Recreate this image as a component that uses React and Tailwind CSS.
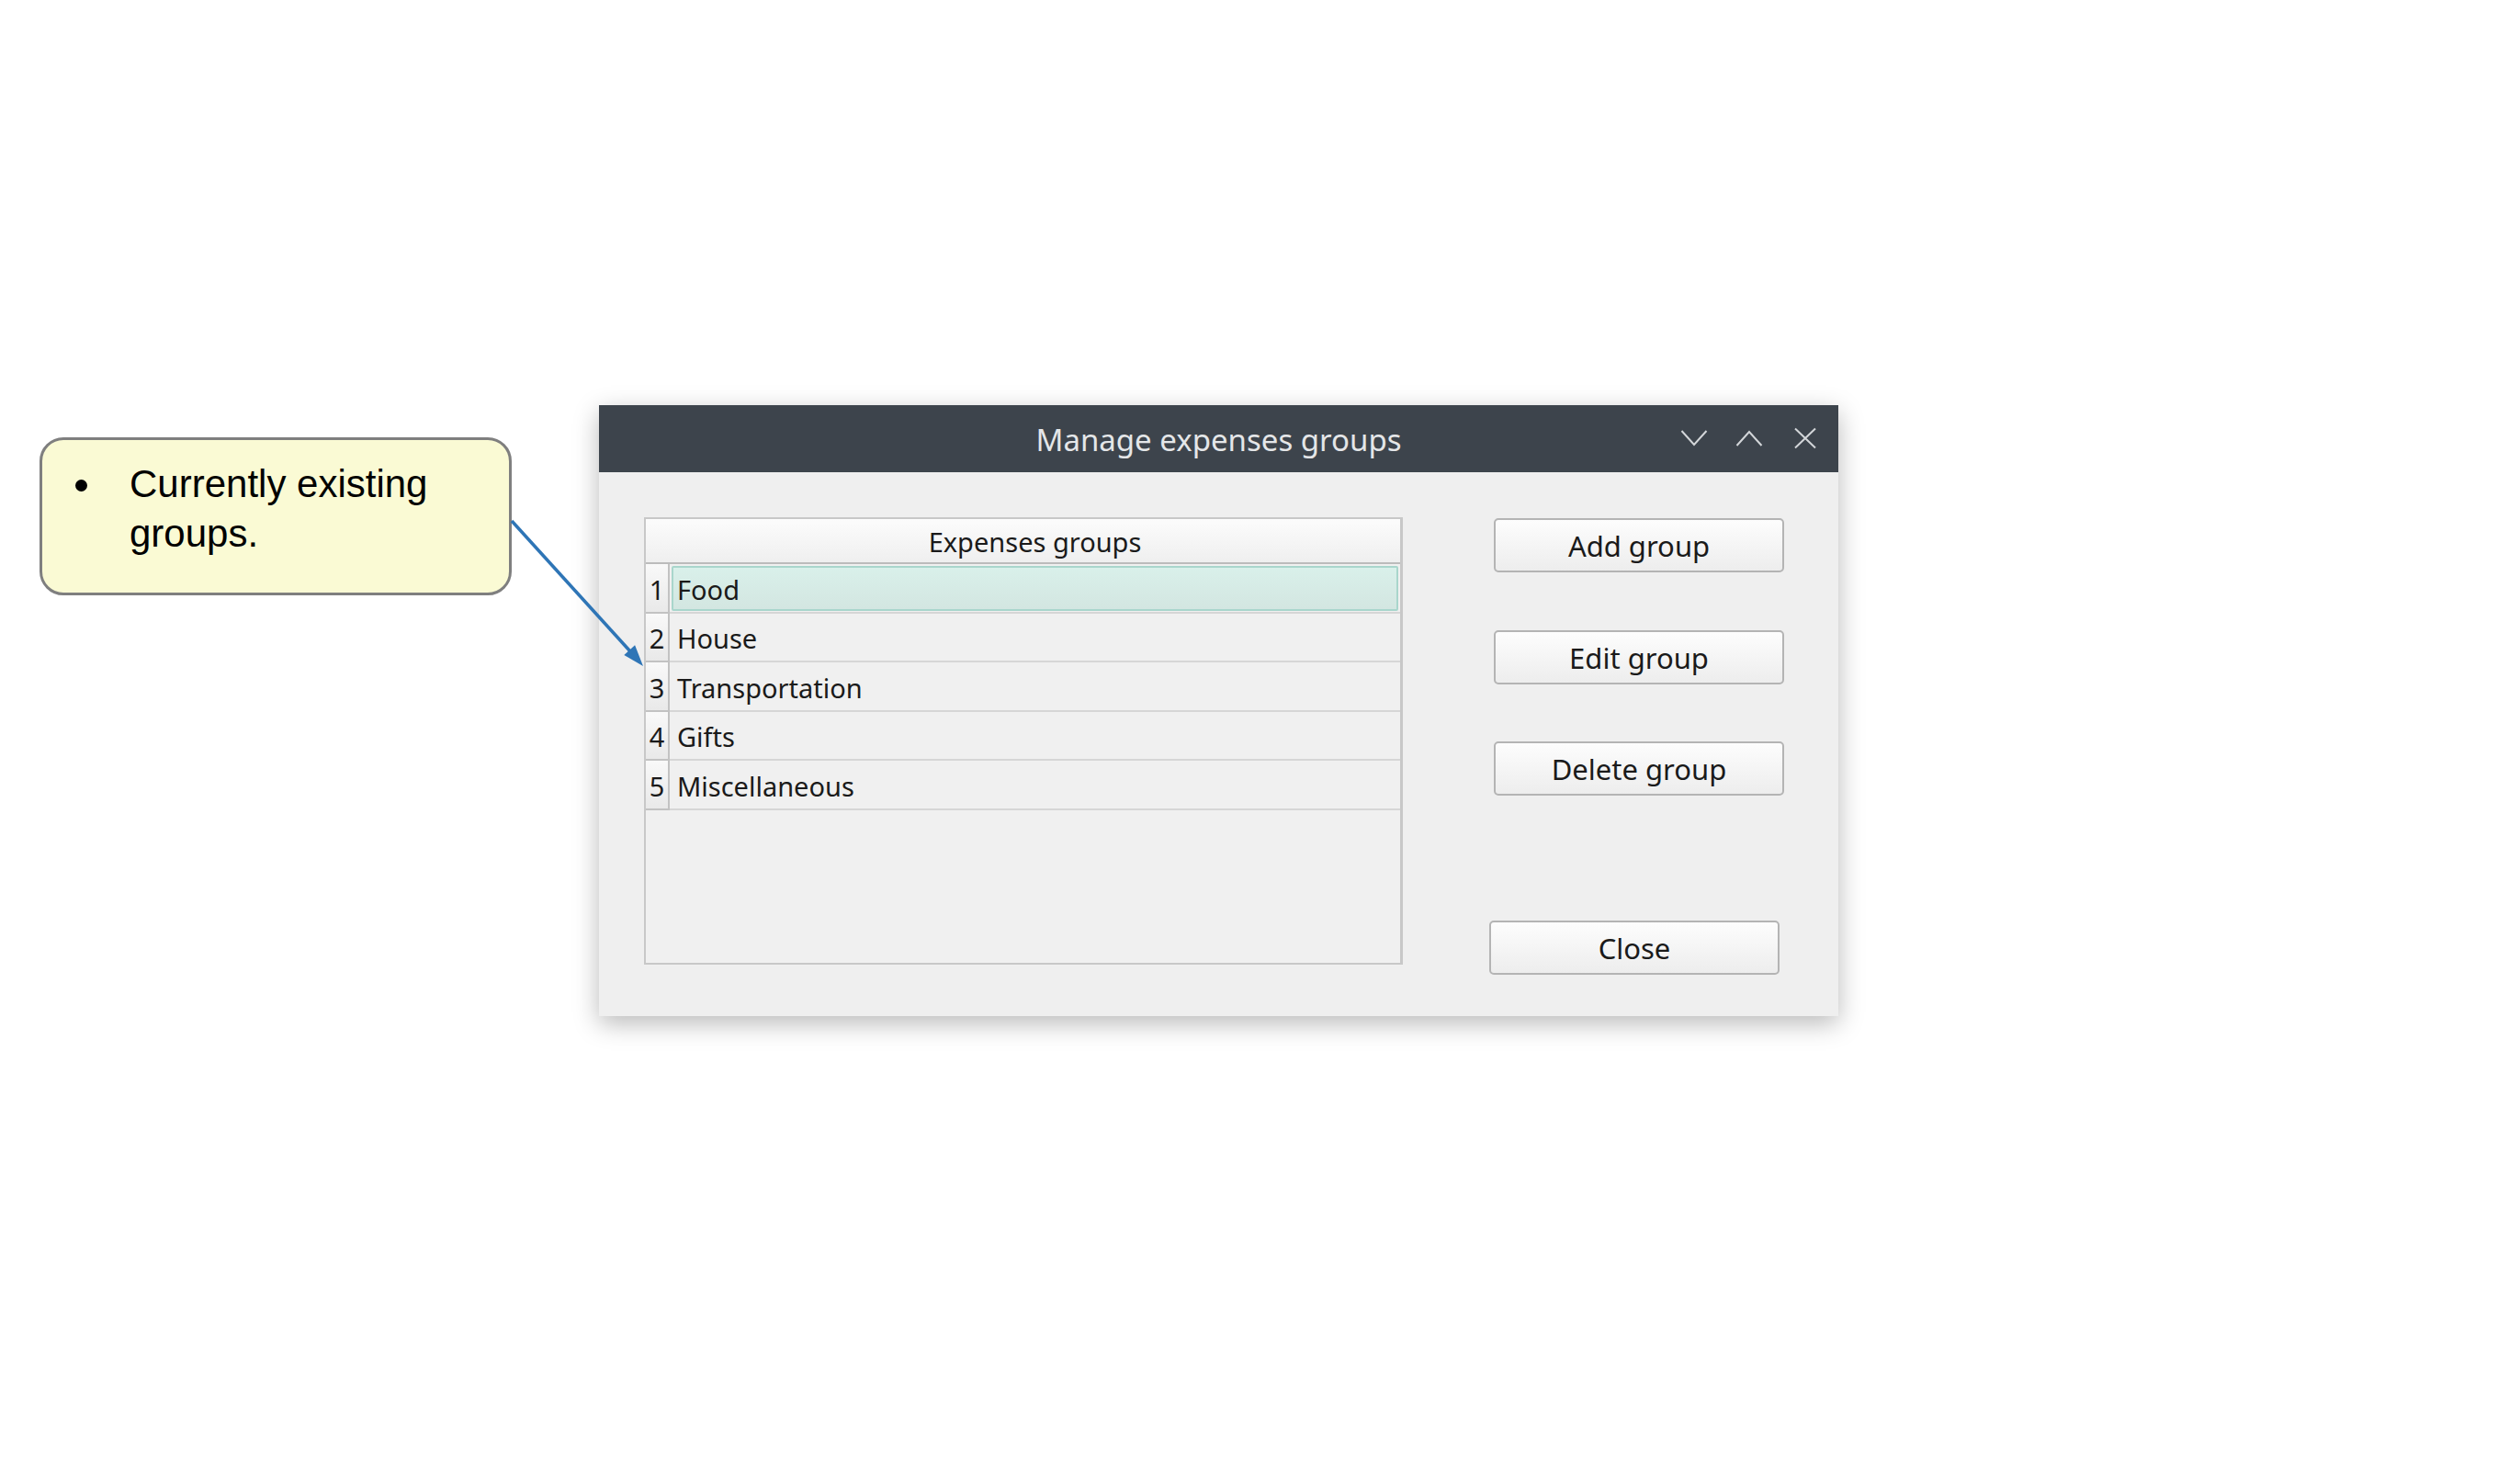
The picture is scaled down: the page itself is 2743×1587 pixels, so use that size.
import React from "react";

const groups = ["Food", "House", "Transportation", "Gifts", "Miscellaneous"];

function ChevronDown() {
    return (
        <svg width="30" height="20" viewBox="0 0 30 20" fill="none">
            <path d="M1.5 2 L15 17 L28.5 2" stroke="#d3d6d9" strokeWidth="2" />
        </svg>
    );
}

function ChevronUp() {
    return (
        <svg width="30" height="20" viewBox="0 0 30 20" fill="none">
            <path d="M1.5 18 L15 3 L28.5 18" stroke="#d3d6d9" strokeWidth="2" />
        </svg>
    );
}

function CloseIcon() {
    return (
        <svg width="26" height="24" viewBox="0 0 26 24" fill="none">
            <path d="M2 1.5 L24 22.5 M24 1.5 L2 22.5" stroke="#d3d6d9" strokeWidth="2" />
        </svg>
    );
}

function Button({ children, className = "" }) {
    return (
        <button
            className={
                "w-[316px] h-[59px] rounded-[5px] border-2 border-[#b4b4b4] bg-gradient-to-b from-[#fdfdfd] to-[#ededed] text-[31px] text-[#1a1a1a] flex items-center justify-center pt-[2px] " +
                className
            }
        >
            {children}
        </button>
    );
}

function GroupsTable() {
    return (
        <div className="w-[826px] h-[487px] flex flex-col border-t-2 border-l-2 border-b-2 border-r-[3px] border-[#c8c8c8] bg-[#f0f0f0]">
            <div className="h-[49px] flex shrink-0 bg-gradient-to-b from-[#fcfcfc] to-[#efefef] border-b-2 border-[#bcbcbc]">
                <div className="w-[26px]" />
                <div className="flex-1 flex items-center justify-center pt-[3px] text-[29px] text-[#1a1a1a]">
                    Expenses groups
                </div>
            </div>
            {groups.map((g, i) => (
                <div key={g} className="h-[53.6px] flex shrink-0">
                    <div className="w-[26px] flex items-center justify-center pt-[3px] text-[29px] text-[#1a1a1a] bg-gradient-to-b from-[#f9f9f9] to-[#e9e9e9] border-r-2 border-b-2 border-[#c2c2c2]">
                        {i + 1}
                    </div>
                    <div className="flex-1 border-b-2 border-[#d6d6d6] flex">
                        {i === 0 ? (
                            <div className="flex-1 m-[2px] mb-[1px] rounded-[2px] border-2 border-[#a9d6cc] bg-gradient-to-b from-[#d9f0ea] to-[#d3e6e1] flex items-center pl-[4px] pt-[3px] text-[29px] text-[#1a1a1a]">
                                {g}
                            </div>
                        ) : (
                            <div className="flex-1 flex items-center pl-[8px] pt-[3px] text-[29px] text-[#1a1a1a]">
                                {g}
                            </div>
                        )}
                    </div>
                </div>
            ))}
            <div className="flex-1" />
        </div>
    );
}

export default function App() {
    return (
        <div className="relative w-[2743px] h-[1587px] bg-white overflow-hidden">
            <div className="flex items-start pt-[441px] pl-[43px]">
                <div className="mt-[35px] w-[514px] h-[172px] rounded-[26px] border-[3px] border-[#7f7f7f] bg-[#fafad4] pt-[21px] pl-[36px] font-['Liberation_Sans',Arial,sans-serif] text-[42px] leading-[54px] text-black flex">
                    <span className="w-[59px] shrink-0">
                        <span className="inline-block w-[13px] h-[13px] rounded-full bg-black mb-[6px]" />
                    </span>
                    <span>
                        Currently existing
                        <br />
                        groups.
                    </span>
                </div>

                <div className="ml-[95px] w-[1349px] h-[665px] flex flex-col bg-[#efefef] shadow-[0_8px_26px_rgba(0,0,0,0.28)] font-['Noto_Sans','Open_Sans',sans-serif]">
                    <div className="h-[73px] shrink-0 bg-[#3d444c] grid grid-cols-[1fr_auto_1fr] items-center">
                        <div />
                        <div className="text-[33px] text-[#e4e6e8] leading-none pt-[1px]">
                            Manage expenses groups
                        </div>
                        <div className="flex items-center justify-end pr-[23px] gap-[30px] pb-[1px]">
                            <ChevronDown />
                            <div className="flex items-center gap-[33px]">
                                <ChevronUp />
                                <CloseIcon />
                            </div>
                        </div>
                    </div>

                    <div className="flex-1 flex pl-[49px] pt-[49px]">
                        <GroupsTable />
                        <div className="ml-[99px] pt-[1px] flex flex-col">
                            <Button>Add group</Button>
                            <Button className="mt-[63px]">Edit group</Button>
                            <Button className="mt-[62px]">Delete group</Button>
                            <Button className="mt-[136px] ml-[-5px]">Close</Button>
                        </div>
                    </div>
                </div>
            </div>

            <svg
                className="absolute inset-0 pointer-events-none"
                width="2743"
                height="1587"
                viewBox="0 0 2743 1587"
            >
                <line x1="557" y1="567" x2="686" y2="709" stroke="#2e75b6" strokeWidth="3.5" />
                <polygon points="700,725 679.3,713.1 691.1,702.3" fill="#2e75b6" />
            </svg>
        </div>
    );
}
